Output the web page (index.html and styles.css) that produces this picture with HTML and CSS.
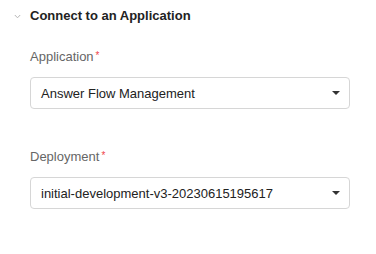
FILE: index.html
```html
<!DOCTYPE html>
<html>
<head>
<meta charset="utf-8">
<link rel="stylesheet" href="styles.css">
</head>
<body>
<section class="panel">
  <div class="panel-header">
    <svg class="chevron" width="7" height="5" viewBox="0 0 7 5"><path d="M0.8 1 L3.5 3.8 L6.2 1" fill="none" stroke="#b5b5b5" stroke-width="1"/></svg>
    <span class="panel-title">Connect to an Application</span>
  </div>
  <div class="panel-body">
    <div class="field">
      <label class="field-label">Application<span class="req">*</span></label>
      <div class="select">
        <span class="select-value">Answer Flow Management</span>
        <span class="caret"></span>
      </div>
    </div>
    <div class="field">
      <label class="field-label">Deployment<span class="req">*</span></label>
      <div class="select">
        <span class="select-value">initial-development-v3-20230615195617</span>
        <span class="caret"></span>
      </div>
    </div>
  </div>
</section>
</body>
</html>
```
FILE: styles.css
```css
html, body {
  margin: 0;
  padding: 0;
  background: #ffffff;
  font-family: "Liberation Sans", Arial, sans-serif;
}
.panel {
  width: 376px;
}
.panel-header {
  display: flex;
  align-items: center;
  height: 16px;
  padding: 8px 0 0 14px;
  gap: 9px;
}
.chevron {
  display: block;
}
.panel-title {
  font-size: 13px;
  font-weight: bold;
  color: #222222;
  line-height: 16px;
}
.panel-body {
  padding: 24px 26px 0 30px;
  display: flex;
  flex-direction: column;
  gap: 39px;
}
.field {
  display: flex;
  flex-direction: column;
  gap: 12px;
}
.field-label {
  font-size: 13px;
  color: #666666;
  line-height: 16px;
}
.req {
  color: #f0464a;
  font-size: 10px;
  margin-left: 2px;
  vertical-align: 2px;
}
.select {
  box-sizing: border-box;
  height: 32px;
  border: 1px solid #d6d6d6;
  border-radius: 4px;
  display: flex;
  align-items: center;
  padding: 0 9px 0 10px;
}
.select-value {
  flex: 1;
  font-size: 13px;
  color: #222222;
  white-space: nowrap;
}
.caret {
  width: 0;
  height: 0;
  border-left: 4px solid transparent;
  border-right: 4px solid transparent;
  border-top: 4px solid #333333;
}
```
